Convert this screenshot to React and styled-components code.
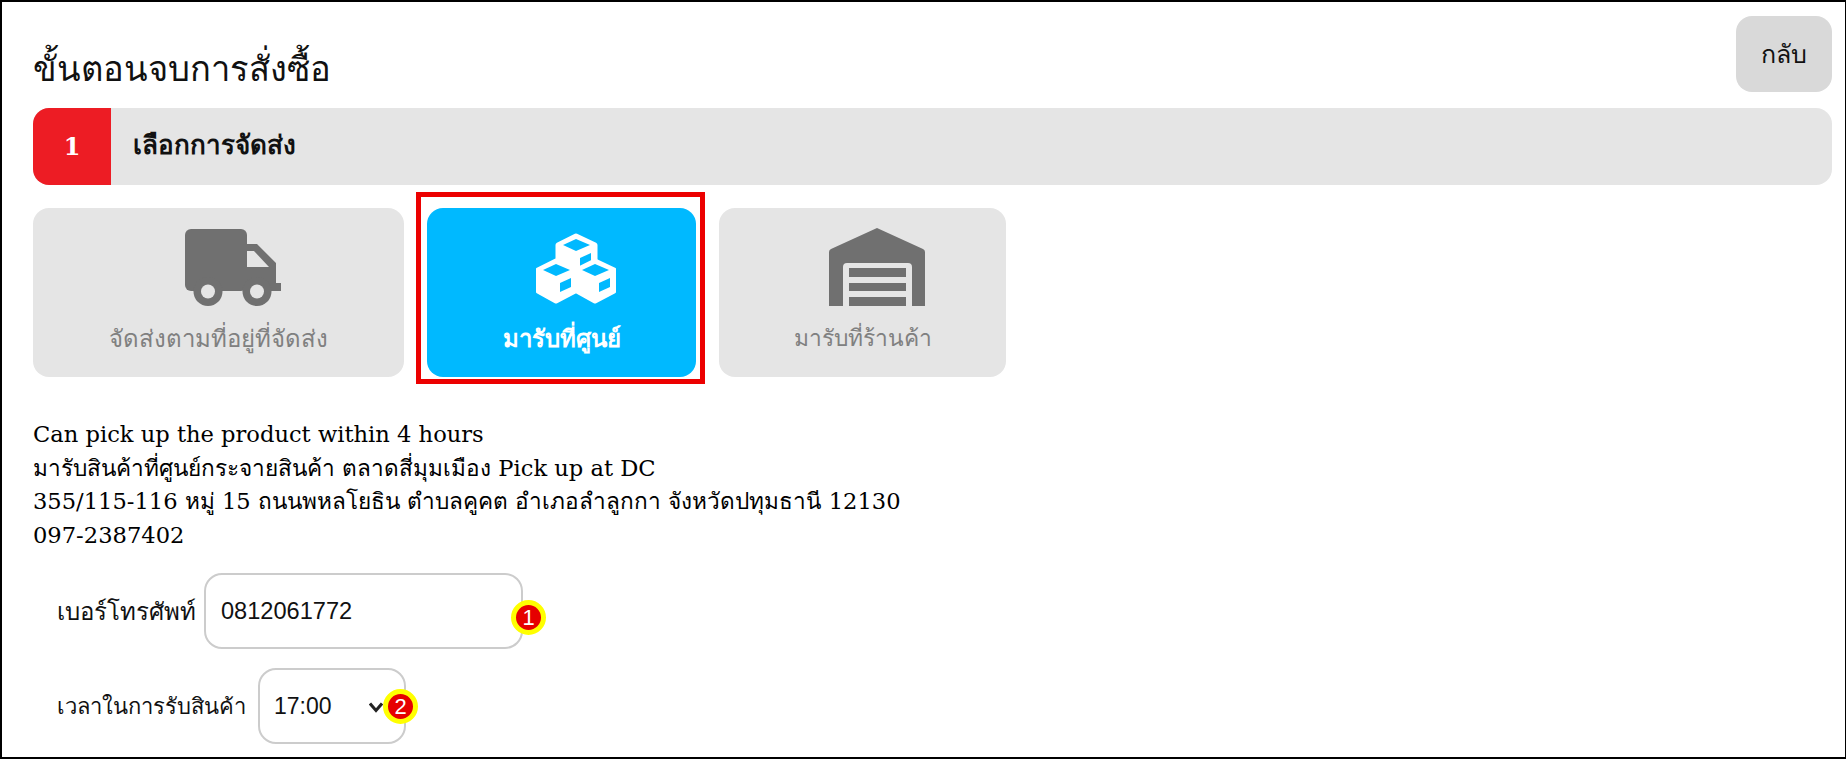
import React from "react";
import styled, { createGlobalStyle } from "styled-components";

const GlobalStyle = createGlobalStyle`
  html, body {
    margin: 0;
    padding: 0;
    background: #fff;
  }
  * {
    box-sizing: border-box;
  }
`;

const thaiFont = `"Noto Sans", "Liberation Sans", sans-serif`;

const Page = styled.div`
  width: 1846px;
  height: 759px;
  overflow: hidden;
  border: 2px solid #000;
  border-right-width: 1px;
  padding: 14px 13px 0 31px;
  font-family: ${thaiFont};
  color: #111;
`;

const Header = styled.div`
  display: flex;
  justify-content: space-between;
  align-items: flex-start;
  height: 76px;
`;

const Title = styled.h1`
  margin: 28px 0 0;
  font-size: 34.5px;
  line-height: 48px;
  font-weight: 400;
`;

const BackButton = styled.button`
  width: 96px;
  height: 76px;
  border: none;
  border-radius: 16px;
  background: #d9d9d9;
  font-family: inherit;
  font-size: 25px;
  color: #111;
`;

const StepBar = styled.div`
  display: flex;
  align-items: center;
  height: 77px;
  margin-top: 16px;
  border-radius: 16px;
  background: #e5e5e5;
  overflow: hidden;
`;

const StepNumber = styled.div`
  display: flex;
  align-items: center;
  justify-content: center;
  width: 78px;
  height: 100%;
  background: #ed1c24;
  color: #fff;
  font-family: "DejaVu Serif", serif;
  font-size: 24px;
  font-weight: 700;
`;

const StepLabel = styled.div`
  margin-left: 22px;
  padding-bottom: 4px;
  font-size: 26px;
  font-weight: 600;
`;

const Options = styled.div`
  display: flex;
  gap: 23px;
  margin-top: 23px;
`;

const Option = styled.div`
  position: relative;
  display: flex;
  flex-direction: column;
  width: ${(props) => props.$width}px;
  height: 169px;
  border-radius: 16px;
  background: ${(props) => (props.$active ? "#00b9ff" : "#e5e5e5")};
  color: ${(props) => (props.$active ? "#fff" : "#808080")};
`;

const IconSlot = styled.div`
  display: flex;
  justify-content: center;
  height: 113px;
  padding-top: ${(props) => props.$top}px;
  padding-left: 29px;
`;

const OptionLabel = styled.div`
  text-align: center;
  font-size: ${(props) => props.$size}px;
  line-height: 34px;
  font-weight: ${(props) => (props.$active ? 700 : 400)};
`;

const Frame = styled.div`
  position: absolute;
  top: -16px;
  right: -9px;
  bottom: -7px;
  left: -11px;
  border: 5px solid #ec0000;
  pointer-events: none;
`;

const Info = styled.div`
  margin-top: 41px;
  font-family: "DejaVu Serif", ${thaiFont};
  font-size: 22.6px;
  line-height: 33.5px;
  color: #000;
`;

const FormRow = styled.div`
  display: flex;
  align-items: center;
  margin-top: ${(props) => props.$top}px;
  padding-left: 24px;
`;

const FieldLabel = styled.label`
  width: ${(props) => props.$width}px;
  font-size: ${(props) => props.$size}px;
  white-space: nowrap;
`;

const FieldWrap = styled.div`
  position: relative;
`;

const TextInput = styled.input`
  display: block;
  width: 319px;
  height: 76px;
  padding: 0 15px;
  border: 2px solid #ccc;
  border-radius: 18px;
  background: #fff;
  font-family: "Liberation Sans", sans-serif;
  font-size: 23.6px;
  color: #111;
  outline: none;
`;

const TimeSelect = styled.select`
  display: block;
  width: 148px;
  height: 76px;
  padding: 0 14px;
  border: 2px solid #ccc;
  border-radius: 18px;
  background: #fff;
  appearance: none;
  font-family: "Liberation Sans", sans-serif;
  font-size: 23px;
  color: #111;
  outline: none;
`;

const Chevron = styled.svg`
  position: absolute;
  top: 34px;
  left: 111px;
`;

const Badge = styled.span`
  position: absolute;
  top: ${(props) => props.$top}px;
  left: ${(props) => props.$left}px;
  display: flex;
  align-items: center;
  justify-content: center;
  width: 35px;
  height: 35px;
  border: 5px solid #ffff00;
  border-radius: 50%;
  background: #e60000;
  color: #fff;
  font-family: "Liberation Sans", sans-serif;
  font-size: 22px;
`;

const TruckIcon = () => (
  <svg width="96" height="77" viewBox="0 0 96 77" fill="#707070">
    <rect width="62" height="62" rx="6" />
    <path d="M60 15H72L91 34V54H96V62H60Z" />
    <path d="M62 22H69L84 38H62Z" fill="#e5e5e5" />
    <circle cx="23" cy="62.5" r="14.5" />
    <circle cx="23" cy="62.5" r="7" fill="#e5e5e5" />
    <circle cx="72" cy="62.5" r="14.5" />
    <circle cx="72" cy="62.5" r="7" fill="#e5e5e5" />
  </svg>
);

const cubePoints = "1,11 19,2 38,11 38,32 19,42 1,32";

const Cube = ({ x, y }) => (
  <g transform={`translate(${x} ${y})`}>
    <polygon points={cubePoints} fill="#fff" stroke="#fff" strokeWidth="5" strokeLinejoin="round" />
    <polygon points="19,5 33,11 19,17 6,11" fill="#00b9ff" />
    <polygon points="23,24 34,19 34,28 23,33" fill="#00b9ff" />
  </g>
);

const CubesIcon = () => (
  <svg width="80" height="71" viewBox="-1 -1 80 71">
    <Cube x={20} y={0} />
    <Cube x={0} y={25} />
    <Cube x={39} y={25} />
  </svg>
);

const GarageIcon = () => (
  <svg width="96" height="78" viewBox="0 0 96 78" fill="#707070">
    <path d="M0 24Q0 22 2 21L48 0L94 21Q96 22 96 24V78H83V39Q83 35 79 35H18Q14 35 14 39V78H0Z" />
    <rect x="20" y="40" width="57" height="9" />
    <rect x="20" y="55" width="57" height="8" />
    <rect x="20" y="69" width="57" height="9" />
  </svg>
);

const App = () => {
  return (
    <>
      <GlobalStyle />
      <Page>
        <Header>
          <Title>ขั้นตอนจบการสั่งซื้อ</Title>
          <BackButton>กลับ</BackButton>
        </Header>
        <StepBar>
          <StepNumber>1</StepNumber>
          <StepLabel>เลือกการจัดส่ง</StepLabel>
        </StepBar>
        <Options>
          <Option $width={371}>
            <IconSlot $top={21}>
              <TruckIcon />
            </IconSlot>
            <OptionLabel $size={24}>จัดส่งตามที่อยู่ที่จัดส่ง</OptionLabel>
          </Option>
          <Option $width={269} $active>
            <IconSlot $top={25}>
              <CubesIcon />
            </IconSlot>
            <OptionLabel $size={24} $active>มารับที่ศูนย์</OptionLabel>
            <Frame />
          </Option>
          <Option $width={287}>
            <IconSlot $top={20}>
              <GarageIcon />
            </IconSlot>
            <OptionLabel $size={22.8}>มารับที่ร้านค้า</OptionLabel>
          </Option>
        </Options>
        <Info>
          <div>Can pick up the product within 4 hours</div>
          <div>มารับสินค้าที่ศูนย์กระจายสินค้า ตลาดสี่มุมเมือง Pick up at DC</div>
          <div>355/115-116 หมู่ 15 ถนนพหลโยธิน ตำบลคูคต อำเภอลำลูกกา จังหวัดปทุมธานี 12130</div>
          <div>097-2387402</div>
        </Info>
        <FormRow $top={21}>
          <FieldLabel $width={147} $size={24}>เบอร์โทรศัพท์</FieldLabel>
          <FieldWrap>
            <TextInput defaultValue="0812061772" />
            <Badge $top={27} $left={307}>1</Badge>
          </FieldWrap>
        </FormRow>
        <FormRow $top={19}>
          <FieldLabel $width={201} $size={22}>เวลาในการรับสินค้า</FieldLabel>
          <FieldWrap>
            <TimeSelect defaultValue="17:00">
              <option>17:00</option>
            </TimeSelect>
            <Chevron width="14" height="11" viewBox="0 0 14 11">
              <path d="M1 1.5L7 8.5L13 1.5" fill="none" stroke="#222" strokeWidth="3" />
            </Chevron>
            <Badge $top={21} $left={125}>2</Badge>
          </FieldWrap>
        </FormRow>
      </Page>
    </>
  );
};

export default App;
